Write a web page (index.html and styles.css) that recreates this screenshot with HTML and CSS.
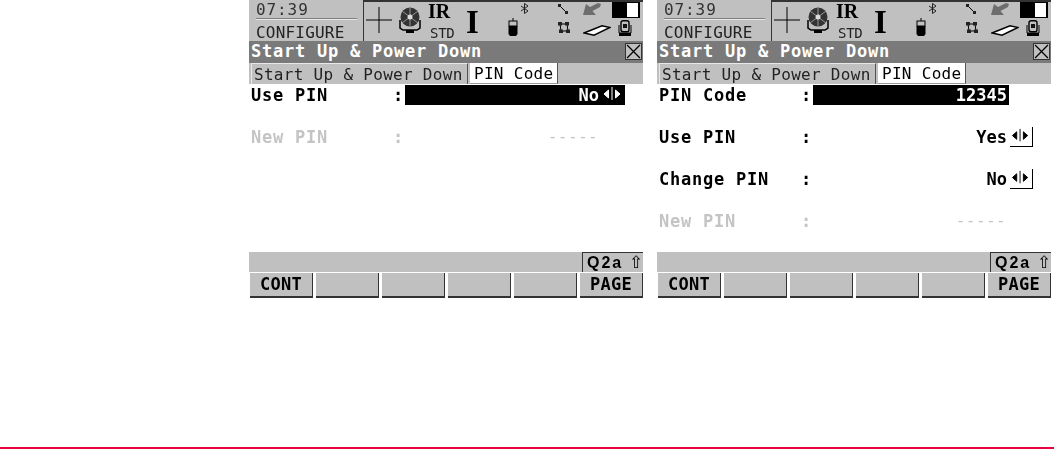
FILE: index.html
```html
<!DOCTYPE html>
<html lang="en">
<head>
    <meta charset="UTF-8">
    <meta name="viewport" content="width=device-width, initial-scale=1.0">
    <title>Start Up &amp; Power Down</title>
    <link rel="stylesheet" href="styles.css">
</head>
<body>
    <!-- icons used by both screens -->
    <svg class="sprite" width="0" height="0">
        <symbol id="i-cross" viewBox="0 0 26 26"><path d="M0 13H26M13 0V26" stroke="#000" stroke-width="1" fill="none"/></symbol>
        <symbol id="i-prism" viewBox="0 0 24 26">
            <path d="M2 13V21L5 23H19L22 21V13" fill="none" stroke="#000" stroke-width="1.5"/>
            <circle cx="12" cy="10" r="9.500" fill="#333"/>
            <path d="M4 4L20 16M20 4L4 16M12 1V19" stroke="#999" stroke-width="1"/>
            <circle cx="12" cy="10" r="2.500" fill="#ddd"/>
            <rect x="8" y="23" width="8" height="3" fill="#000"/>
        </symbol>
        <symbol id="i-rod" viewBox="0 0 10 18">
            <path d="M5 0V3" stroke="#000"/>
            <rect x="1" y="3" width="8" height="5" fill="#c0c0c0" stroke="#000"/>
            <path d="M0.5 8H9.5V16L8 18H2L0.5 16Z" fill="#000"/>
        </symbol>
        <symbol id="i-bt" viewBox="0 0 9 11"><path d="M1 3L8 8L4.5 10.5V.5L8 3L1 8" fill="none" stroke="#222" stroke-width="1"/></symbol>
        <symbol id="i-link" viewBox="0 0 10 10"><path d="M2 2L8 8" stroke="#000"/><rect x="0" y="0" width="3" height="3" fill="#222"/><rect x="7" y="7" width="3" height="3" fill="#222"/></symbol>
        <symbol id="i-net" viewBox="0 0 12 11">
            <path d="M2 2H9L10 9H3Z" fill="none" stroke="#000"/>
            <rect x="0" y="0" width="4" height="3.5" fill="#222"/><rect x="7" y="0" width="4" height="3.5" fill="#222"/>
            <rect x="1" y="7.5" width="4" height="3.5" fill="#222"/><rect x="8" y="7.5" width="4" height="3.5" fill="#222"/>
        </symbol>
        <symbol id="i-arrow" viewBox="0 0 18 12"><path d="M18 1L15 0L7 4L3 1L0 12H13L9.500 8L17 4Z" fill="#6e6e6e"/></symbol>
        <symbol id="i-slab" viewBox="0 0 28 11"><path d="M1 8L19 .8L27 2.500L11 10.200Z" fill="#fff" stroke="#000" stroke-width="1.500"/></symbol>
        <symbol id="i-station" viewBox="0 0 14 16">
            <rect x="3" y=".7" width="8" height="11" rx="2" fill="#c0c0c0" stroke="#000" stroke-width="1.400"/>
            <rect x="5" y="4" width="4" height="4" fill="#111"/>
            <path d="M1 5V13H13V5" fill="none" stroke="#000"/><rect x="1" y="13" width="12" height="3" fill="#000"/>
        </symbol>
        <symbol id="i-lr" viewBox="0 0 23 20">
            <path d="M7 5V13L2.500 9Z M14 5V13L18.500 9Z M10.500 2V15"/>
        </symbol>
    </svg>

    <div class="page">
        <div class="screens">

            <section class="screen">
                <header class="top">
                    <div class="clock">
                        <div class="time">07:39</div>
                        <div class="mode">CONFIGURE</div>
                    </div>
                    <div class="status">
                        <svg class="ic-cross"><use href="#i-cross"/></svg>
                        <svg class="ic-prism"><use href="#i-prism"/></svg>
                        <div class="meas"><b>IR</b><span>STD</span></div>
                        <div class="bigi">I</div>
                        <svg class="ic-rod"><use href="#i-rod"/></svg>
                        <svg class="ic-bt"><use href="#i-bt"/></svg>
                        <div class="pair">
                            <svg class="ic-link"><use href="#i-link"/></svg>
                            <svg class="ic-net"><use href="#i-net"/></svg>
                        </div>
                        <div class="pair wide">
                            <svg class="ic-arrow"><use href="#i-arrow"/></svg>
                            <svg class="ic-slab"><use href="#i-slab"/></svg>
                        </div>
                        <div class="pair last">
                            <div class="battery"><i></i></div>
                            <svg class="ic-station"><use href="#i-station"/></svg>
                        </div>
                    </div>
                </header>
                <div class="title"><span>Start Up &amp; Power Down</span><div class="close">
                    <svg viewBox="0 0 14 14"><path d="M1 1L13 13M13 1L1 13" stroke="#000" stroke-width="1.200"/></svg>
                </div></div>
                <div class="tabs">
                    <div class="tab">Start Up &amp; Power Down</div>
                    <div class="tab active">PIN Code</div>
                </div>
                <div class="rows">
                    <div class="row focus has-lr">
                        <div class="label">Use PIN</div><div class="colon">:</div>
                        <div class="value">No</div>
                        <svg class="lr"><use href="#i-lr"/></svg>
                    </div>
                    <div class="row dim">
                        <div class="label">New PIN</div><div class="colon">:</div>
                        <div class="value">-----</div>
                    </div>
                </div>
                <div class="softbar"><div class="keyboard">Q2a<span>⇧</span></div></div>
                <div class="keys">
                    <div class="key">CONT</div><div class="key"></div><div class="key"></div>
                    <div class="key"></div><div class="key"></div><div class="key">PAGE</div>
                </div>
            </section>

            <section class="screen">
                <header class="top">
                    <div class="clock">
                        <div class="time">07:39</div>
                        <div class="mode">CONFIGURE</div>
                    </div>
                    <div class="status">
                        <svg class="ic-cross"><use href="#i-cross"/></svg>
                        <svg class="ic-prism"><use href="#i-prism"/></svg>
                        <div class="meas"><b>IR</b><span>STD</span></div>
                        <div class="bigi">I</div>
                        <svg class="ic-rod"><use href="#i-rod"/></svg>
                        <svg class="ic-bt"><use href="#i-bt"/></svg>
                        <div class="pair">
                            <svg class="ic-link"><use href="#i-link"/></svg>
                            <svg class="ic-net"><use href="#i-net"/></svg>
                        </div>
                        <div class="pair wide">
                            <svg class="ic-arrow"><use href="#i-arrow"/></svg>
                            <svg class="ic-slab"><use href="#i-slab"/></svg>
                        </div>
                        <div class="pair last">
                            <div class="battery"><i></i></div>
                            <svg class="ic-station"><use href="#i-station"/></svg>
                        </div>
                    </div>
                </header>
                <div class="title"><span>Start Up &amp; Power Down</span><div class="close">
                    <svg viewBox="0 0 14 14"><path d="M1 1L13 13M13 1L1 13" stroke="#000" stroke-width="1.200"/></svg>
                </div></div>
                <div class="tabs">
                    <div class="tab">Start Up &amp; Power Down</div>
                    <div class="tab active">PIN Code</div>
                </div>
                <div class="rows">
                    <div class="row focus">
                        <div class="label">PIN Code</div><div class="colon">:</div>
                        <div class="value">12345</div>
                    </div>
                    <div class="row has-lr">
                        <div class="label">Use PIN</div><div class="colon">:</div>
                        <div class="value">Yes</div>
                        <svg class="lr boxed"><use href="#i-lr"/></svg>
                    </div>
                    <div class="row has-lr">
                        <div class="label">Change PIN</div><div class="colon">:</div>
                        <div class="value">No</div>
                        <svg class="lr boxed"><use href="#i-lr"/></svg>
                    </div>
                    <div class="row dim">
                        <div class="label">New PIN</div><div class="colon">:</div>
                        <div class="value">-----</div>
                    </div>
                </div>
                <div class="softbar"><div class="keyboard">Q2a<span>⇧</span></div></div>
                <div class="keys">
                    <div class="key">CONT</div><div class="key"></div><div class="key"></div>
                    <div class="key"></div><div class="key"></div><div class="key">PAGE</div>
                </div>
            </section>

        </div>
        <div class="rule"></div>
    </div>
</body>
</html>
```

FILE: styles.css
```css
* {
    margin: 0;
    padding: 0;
    box-sizing: border-box;
}

body {
    background: #fff;
    font-family: 'DejaVu Sans Mono', 'Liberation Mono', monospace;
    font-size: 16px;
    color: #000;
    overflow: hidden;
}

.sprite {
    position: absolute;
}

.page {
    height: 449px;
    display: flex;
    flex-direction: column;
}

.screens {
    display: flex;
    gap: 14px;
    padding-left: 249px;
    filter: blur(0.35px);
}

.screen {
    width: 394px;
    height: 298px;
    display: flex;
    flex-direction: column;
}

/* Top status area */
.top {
    height: 41px;
    display: flex;
    background: #c0c0c0;
}

.clock {
    width: 114px;
    padding: 2px 6px 0 7px;
}

.time {
    height: 17px;
    line-height: 15px;
    border-bottom: 1px solid #808080;
    letter-spacing: 0.9px;
    color: #333;
    box-shadow: 0 1px 0 #e8e8e8;
}

.mode {
    margin-top: 6px;
    line-height: 15px;
    letter-spacing: 0.2px;
    color: #222;
}

.status {
    flex: 1;
    display: flex;
    border-top: 2px solid #333;
    border-left: 1px solid #333;
    padding-left: 2px;
}

.ic-cross {
    width: 26px;
    height: 26px;
    margin: 5px 6px 0 0;
}

.ic-prism {
    width: 24px;
    height: 26px;
    margin: 5px 6px 0 0;
}

.meas {
    width: 38px;
    display: flex;
    flex-direction: column;
}

.meas b {
    font-family: 'Liberation Serif', serif;
    font-size: 20px;
    line-height: 15px;
    margin-top: 2px;
}

.meas span {
    font-size: 14px;
    line-height: 12px;
    margin: 8px 0 0 2px;
    letter-spacing: -0.300px;
    color: #222;
}

.bigi {
    width: 42px;
    font-family: 'Liberation Serif', serif;
    font-weight: bold;
    font-size: 33px;
    line-height: 30px;
    margin-top: 5px;
}

.ic-rod {
    width: 10px;
    height: 18px;
    margin: 16px 2px 0 0;
}

.ic-bt {
    width: 9px;
    height: 11px;
    margin: 1px 29px 0 0;
}

.pair {
    width: 25px;
    display: flex;
    flex-direction: column;
}

.pair.wide {
    width: 29px;
}

.ic-link {
    width: 10px;
    height: 10px;
    margin-top: 2px;
}

.ic-net {
    width: 12px;
    height: 11px;
    margin-top: 8px;
}

.ic-arrow {
    width: 18px;
    height: 12px;
    margin-top: 1px;
}

.ic-slab {
    width: 28px;
    height: 11px;
    margin-top: 10px;
}

.battery {
    width: 28px;
    height: 16px;
    background: #000;
    display: flex;
    justify-content: flex-end;
    padding: 1px 2px 1px 0;
}

.battery i {
    width: 11px;
    background: #fff;
}

.ic-station {
    width: 14px;
    height: 16px;
    margin: 2px 0 0 6px;
}

/* Title bar */
.title {
    height: 22px;
    background: #7a7a7a;
    color: #fff;
    font-size: 17px;
    font-weight: bold;
    letter-spacing: 0.77px;
    line-height: 21px;
    padding-left: 2px;
    display: flex;
    justify-content: space-between;
}

.close {
    width: 17px;
    height: 17px;
    margin: 2px 1px 0 0;
    background: #c0c0c0;
    border: 1px solid #333;
    display: flex;
}

.close svg {
    width: 15px;
    height: 15px;
}

/* Tabs */
.tabs {
    height: 21px;
    background: #c0c0c0;
    display: flex;
    gap: 2px;
    padding-left: 2px;
}

.tab {
    width: 217px;
    padding: 0 2px;
    line-height: 22px;
    white-space: nowrap;
    letter-spacing: 0.3px;
    color: #222;
    border-top: 1px solid #e8e8e8;
    border-left: 1px solid #e8e8e8;
    border-right: 1px solid #555;
}

.tab.active {
    width: 88px;
    background: #fff;
    color: #000;
    border: none;
    border-right: 1px solid #555;
    border-bottom: 1px solid #999;
    padding: 0 4px;
}

/* Form rows */
.rows {
    height: 168px;
    padding-top: 1px;
    display: flex;
    flex-direction: column;
    gap: 22px;
}

.row {
    height: 20px;
    display: flex;
    font-size: 17px;
    font-weight: bold;
    line-height: 20px;
    letter-spacing: 0.77px;
    padding-left: 2px;
}

.label {
    width: 142px;
}

.colon {
    width: 12px;
}

.value {
    width: 196px;
    text-align: right;
    padding-right: 2px;
    letter-spacing: 0;
}

.row.focus .value {
    background: #000;
    color: #fff;
}

.lr {
    width: 23px;
    height: 20px;
    margin-left: 1px;
    fill: #000;
    stroke: #000;
    stroke-width: 1;
}

.row.focus .lr {
    background: #000;
    fill: #fff;
    stroke: #fff;
    margin-left: 0;
    width: 24px;
}

.lr.boxed {
    border-bottom: 1px solid #000;
    border-right: 1px solid #000;
}

.row.dim {
    color: #c4c4c4;
}

.row.dim .value {
    font-size: 16px;
    font-weight: normal;
    padding-right: 3px;
    letter-spacing: 0.400px;
}

/* Softkeys */
.softbar {
    height: 20px;
    background: #c0c0c0;
    display: flex;
    justify-content: flex-end;
}

.keyboard {
    width: 61px;
    border-top: 1px solid #333;
    border-left: 1px solid #333;
    font-family: 'Liberation Sans', sans-serif;
    font-weight: bold;
    font-size: 16px;
    line-height: 19px;
    letter-spacing: 2px;
    padding-left: 4px;
    display: flex;
    gap: 6px;
}

.keyboard span {
    font-size: 17px;
    font-weight: normal;
    letter-spacing: 0;
}

.keys {
    height: 25px;
    margin-top: 1px;
    display: flex;
    gap: 3px;
    padding-left: 1px;
}

.key {
    flex: 1;
    background: #c0c0c0;
    border-right: 1px solid #333;
    border-bottom: 2px solid #333;
    text-align: center;
    font-size: 17px;
    font-weight: bold;
    line-height: 23px;
    letter-spacing: 0.3px;
}

/* Footer line */
.rule {
    height: 2px;
    margin-top: auto;
    background: #e8003f;
}
```
